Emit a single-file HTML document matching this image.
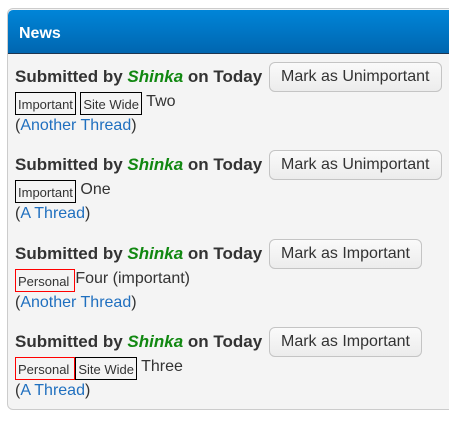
<!DOCTYPE html>
<html><head><style>
*{margin:0;padding:0;box-sizing:border-box}
body{width:449px;height:423px;background:#fff;font-family:"Liberation Sans",sans-serif;position:relative;overflow:hidden;color:#222}
.box{position:absolute;left:7px;top:8px;width:460px;height:402px;border:1px solid #ccc;border-radius:6px;background:#f4f4f4;overflow:hidden}
.hd{position:absolute;left:0;top:1px;right:0;height:44px;background:linear-gradient(#0085d8,#0066b0);border-top-left-radius:5px;border-bottom:1px solid #1d3550}
.hd span{position:absolute;left:11px;top:15px;color:#fff;font-weight:bold;font-size:16px}
.it{position:absolute;left:15px;width:430px}
.t{position:absolute;left:0;top:-9px;font-weight:bold;font-size:17px;color:#333;white-space:nowrap}
.t i{color:#118811}
.b{position:absolute;left:254px;top:-14px;height:30px;border:1px solid #c4c4c4;border-radius:6px;background:linear-gradient(#fafafa,#ececec);font-size:16px;color:#333;line-height:28px;padding:0 11px;white-space:nowrap}
.g{position:absolute;top:16px;left:0;height:24px;white-space:nowrap;font-size:16px;line-height:20px;color:#333}
.tag{display:inline-block;height:23px;border:1px solid #000;font-size:13px;line-height:23px;padding:0 2px;vertical-align:top;color:#333}
.l{position:absolute;top:41px;left:0;font-size:16px;color:#1f6fbf;white-space:nowrap}
.l span{color:#333}
</style></head><body>
<div class="box"><div class="hd"><span>News</span></div></div>

<div class="it" style="top:76px">
<div class="t">Submitted by <i>Shinka</i> on Today</div>
<div class="b">Mark as Unimportant</div>
<div class="g"><span class="tag">Important</span> <span class="tag">Site Wide</span> Two</div>
<div class="l"><span>(</span>Another Thread<span>)</span></div>
</div>

<div class="it" style="top:164px">
<div class="t">Submitted by <i>Shinka</i> on Today</div>
<div class="b">Mark as Unimportant</div>
<div class="g"><span class="tag">Important</span> One</div>
<div class="l"><span>(</span>A Thread<span>)</span></div>
</div>

<div class="it" style="top:253px">
<div class="t">Submitted by <i>Shinka</i> on Today</div>
<div class="b">Mark as Important</div>
<div class="g"><span class="tag" style="border-color:#ff0000;padding-right:5px">Personal</span>Four (important)</div>
<div class="l"><span>(</span>Another Thread<span>)</span></div>
</div>

<div class="it" style="top:341px">
<div class="t">Submitted by <i>Shinka</i> on Today</div>
<div class="b">Mark as Important</div>
<div class="g"><span class="tag" style="border-color:#ff0000;padding-right:5px">Personal</span><span class="tag">Site Wide</span> Three</div>
<div class="l"><span>(</span>A Thread<span>)</span></div>
</div>
</body></html>
